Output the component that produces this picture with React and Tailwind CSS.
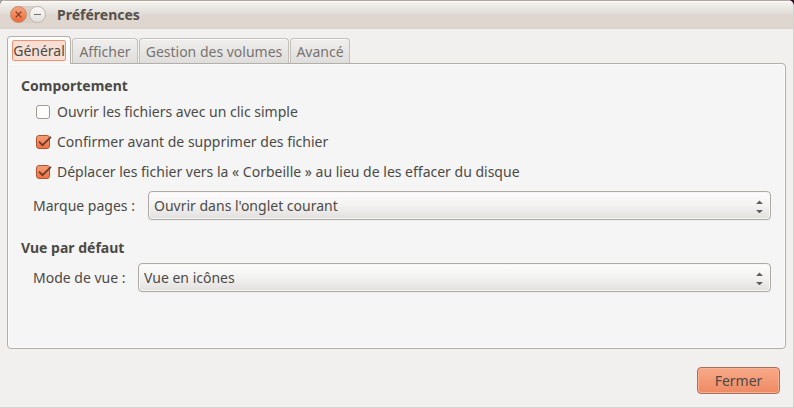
import { useState } from "react";

const TABS = [
  { id: "general", label: "Général", width: "w-16" },
  { id: "display", label: "Afficher", width: "w-[66px]" },
  { id: "volumes", label: "Gestion des volumes", width: "w-[150px]" },
  { id: "advanced", label: "Avancé", width: "w-[60px]" },
];

function Tab({ tab, active, onSelect }) {
  if (active) {
    return (
      <button
        type="button"
        role="tab"
        aria-selected="true"
        onClick={onSelect}
        className={`${tab.width} z-10 -mb-px flex h-7 shrink-0 items-center justify-center rounded-t border border-b-0 border-[#b2aea8] bg-gradient-to-b from-white to-[#f5f5f5] whitespace-nowrap`}
      >
        <span className="flex h-[21px] w-[54px] items-center justify-center rounded-xs border border-[#f0936c] bg-[#f8dfd5]">
          {tab.label}
        </span>
      </button>
    );
  }
  return (
    <button
      type="button"
      role="tab"
      aria-selected="false"
      onClick={onSelect}
      className={`${tab.width} flex h-[25px] shrink-0 items-center justify-center rounded-t border border-b-0 border-[#c4c1bd] bg-gradient-to-b from-[#f0efee] to-[#e0dedc] pt-0.5 whitespace-nowrap text-[#77746f] shadow-[inset_0_1px_0_#f9f9f8]`}
    >
      {tab.label}
    </button>
  );
}

function CheckRow({ id, label, defaultChecked }) {
  return (
    <div className="flex h-[30px] items-center gap-1.5 pl-3.5">
      <span className="relative flex size-[15px]">
        <input
          id={id}
          type="checkbox"
          defaultChecked={defaultChecked}
          className="peer size-3.5 appearance-none rounded-[3px] border border-[#9f9a94] bg-white checked:border-[#b0532e] checked:bg-gradient-to-b checked:from-[#f59d78] checked:to-[#ee7445]"
        />
        <svg
          viewBox="0 0 16 15"
          className="pointer-events-none absolute top-0 left-0 hidden h-[15px] w-4 peer-checked:block"
          fill="none"
          aria-hidden="true"
        >
          <path d="M3 6.6 6.5 10.2 15 1.8" stroke="#6b3a28" strokeWidth="1.7" />
        </svg>
      </span>
      <label htmlFor={id}>{label}</label>
    </div>
  );
}

function SelectRow({ id, label, labelWidth, options }) {
  return (
    <div className="flex items-center pr-3.5 pl-[25px]">
      <label htmlFor={id} className={`${labelWidth} shrink-0 whitespace-nowrap`}>
        {label}
      </label>
      <div className="relative flex min-w-0 flex-1">
        <select
          id={id}
          className="h-[29px] w-full appearance-none rounded border border-[#aeaaa5] bg-gradient-to-b from-[#fdfdfd] via-[#f3f2f1] to-[#e2e0de] px-[5px] shadow-[inset_0_0_0_1px_#f7f6f5,0_1px_0_#ededec]"
        >
          {options.map((option) => (
            <option key={option}>{option}</option>
          ))}
        </select>
        <svg
          viewBox="0 0 7 13"
          className="pointer-events-none absolute top-[9px] right-2 h-[13px] w-[7px]"
          fill="#5f5c59"
          aria-hidden="true"
        >
          <path d="M0 4 3.5.5 7 4zM0 10h7l-3.5 3.3z" />
        </svg>
      </div>
    </div>
  );
}

export default function App() {
  const [active, setActive] = useState("general");

  return (
    <div className="bg-linear-[90deg,#a79c95_50%,#300a24_50%] font-['Noto_Sans',sans-serif] text-sm leading-5 text-[#4c4a46]">
      <main className="flex min-h-screen flex-col overflow-hidden rounded-t-md border-r border-b border-[#d5d3d0] bg-[#f1f0ee]">
        <header className="flex h-[29px] items-center border-t border-b border-t-[#b3a59a] border-b-[#dad0c8] bg-linear-[180deg,#f6f5f3_0%,#dfdad4_50%,#dfd6d0_51%,#dfd6d0_100%] pl-2.5 shadow-[inset_0_1px_0_#fdfcfb]">
          <div className="flex items-center gap-0.5 rounded-full bg-[#d8d0c8]">
            <button
              type="button"
              aria-label="Fermer la fenêtre"
              className="flex size-[17px] items-center justify-center rounded-full border border-[#c68b6d] bg-gradient-to-b from-[#f5a17c] to-[#ee6a35]"
            >
              <svg viewBox="0 0 7 7" className="size-[7px]" fill="none" aria-hidden="true">
                <path d="m.7.7 5.6 5.6M6.3.7.7 6.3" stroke="#6e3a26" strokeWidth="1.1" />
              </svg>
            </button>
            <button
              type="button"
              aria-label="Réduire"
              className="flex size-[17px] items-center justify-center rounded-full border border-[#beb6ad] bg-gradient-to-b from-[#fbfaf9] to-[#e3dfdb]"
            >
              <svg viewBox="0 0 7 7" className="size-[7px]" fill="none" aria-hidden="true">
                <path d="M0 3.5h7" stroke="#77706a" />
              </svg>
            </button>
          </div>
          <h1 className="ml-[11px] font-bold text-[#57514b]">Préférences</h1>
        </header>

        <div className="flex flex-1 flex-col px-[7px] pt-[7px]">
          <div role="tablist" className="flex items-end gap-px">
            {TABS.map((tab) => (
              <Tab
                key={tab.id}
                tab={tab}
                active={tab.id === active}
                onSelect={() => setActive(tab.id)}
              />
            ))}
          </div>

          <section
            role="tabpanel"
            className="flex-1 rounded-b rounded-tr border border-[#b2aea8] bg-[#f5f5f5] pt-3 shadow-[inset_0_0_0_1px_#fbfbfb]"
          >
            <h2 className="px-[13px] font-bold">Comportement</h2>
            <div className="mt-px pl-3.5">
              <CheckRow id="single-click" label="Ouvrir les fichiers avec un clic simple" />
              <CheckRow
                id="confirm-delete"
                label="Confirmer avant de supprimer des fichier"
                defaultChecked
              />
              <CheckRow
                id="use-trash"
                label="Déplacer les fichier vers la « Corbeille » au lieu de les effacer du disque"
                defaultChecked
              />
            </div>
            <div className="mt-1">
              <SelectRow
                id="bookmarks"
                label="Marque pages :"
                labelWidth="w-[115px]"
                options={["Ouvrir dans l'onglet courant", "Ouvrir dans un nouvel onglet"]}
              />
            </div>

            <h2 className="mt-[18px] px-[13px] font-bold">Vue par défaut</h2>
            <div className="mt-[5px]">
              <SelectRow
                id="view-mode"
                label="Mode de vue :"
                labelWidth="w-[105px]"
                options={["Vue en icônes", "Vue en liste"]}
              />
            </div>
          </section>
        </div>

        <footer className="flex justify-end px-[13px] pt-[18px] pb-[13px]">
          <button
            type="button"
            className="h-[27px] min-w-[83px] rounded border border-[#a8705a] bg-gradient-to-b from-[#f8a988] to-[#ef8a62] px-4 shadow-[inset_0_0_0_1px_#f9b092]"
          >
            Fermer
          </button>
        </footer>
      </main>
    </div>
  );
}
